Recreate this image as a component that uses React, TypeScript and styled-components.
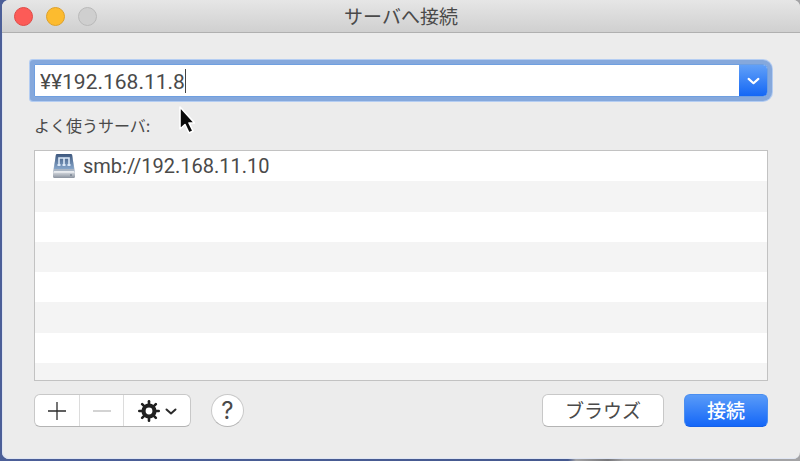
import React, { useState } from "react";
import styled, { createGlobalStyle, css } from "styled-components";

const GlobalStyle = createGlobalStyle`
  *, *::before, *::after { box-sizing: border-box; }
  body {
    margin: 0;
    font-family: Inter, "Noto Sans CJK JP", sans-serif;
    color: #4a4a4a;
  }
  button, input { font: inherit; color: inherit; }
`;

const addressText = css`
  font-family: Roboto, "Noto Sans CJK JP", sans-serif;
  font-size: 20px;
  line-height: 24px;
`;

const Desktop = styled.div`
  display: flex;
  min-height: 100vh;
  padding: 0 0 2px 2px;
  background: linear-gradient(90deg, #4c5f98 0, #45598f 71%, #a3a3a5 72%, #77777a 76%, #a3a3a5 78%);
`;

const Window = styled.main`
  position: relative;
  flex: 1;
  display: flex;
  flex-direction: column;
  background: #ececec;
  border-radius: 7px;
  box-shadow: inset 1px -1px 0 #dfe5f2;
  overflow: hidden;
`;

const TitleBar = styled.header`
  display: grid;
  grid-template-columns: 1fr auto 1fr;
  align-items: center;
  height: 33px;
  padding: 0 12px;
  background: linear-gradient(#e6e6e6, #d0d0d0);
  border-bottom: 1px solid #b0b0b0;
`;

const Lights = styled.div`
  display: flex;
  gap: 13px;
`;

const Light = styled.button<{ $fill: string; $edge: string }>`
  width: 19px;
  height: 19px;
  padding: 0;
  border: 1px solid ${(p) => p.$edge};
  border-radius: 50%;
  background: ${(p) => p.$fill};
`;

const Title = styled.h1`
  margin: 0;
  padding-top: 4px;
  font-size: 19px;
  line-height: 28px;
  font-weight: 400;
`;

const Content = styled.form`
  flex: 1;
  display: flex;
  flex-direction: column;
  padding: 31px 32px 32px;
`;

const ComboBox = styled.div`
  display: flex;
  height: 33px;
  border: 1px solid #6f9fe0;
  border-radius: 1px 5px 5px 1px;
  background: #fff;
  box-shadow: 0 0 0 4px #85a8dc, 0 0 0 5px #b4cdf2;
`;

const Entry = styled.label`
  flex: 1;
  min-width: 0;
  display: flex;
  align-items: center;
  padding-left: 5px;
  cursor: text;
`;

const AddressInput = styled.input`
  ${addressText}
  font-size: 21px;
  field-sizing: content;
  max-width: 100%;
  padding: 2px 0 0;
  border: 0;
  outline: 0;
  background: transparent;
  caret-color: transparent;
`;

const Caret = styled.span`
  width: 1px;
  height: 24px;
  background: #444;
`;

const DropButton = styled.button`
  display: grid;
  place-items: center;
  width: 28px;
  padding: 0;
  border: 0;
  border-radius: 0 4px 4px 0;
  background: linear-gradient(#61a0f8, #1467f5);
  color: #fff;
`;

const Caption = styled.h2`
  margin: 19px 0 14px;
  font-size: 16px;
  line-height: 20px;
  font-weight: 400;
`;

const ServerList = styled.ul`
  flex: 1;
  display: grid;
  grid-template-rows: repeat(7, minmax(30px, 16fr)) 9fr;
  margin: 0;
  padding: 0;
  border: 1px solid #c2c2c2;
  list-style: none;
`;

const ServerRow = styled.li`
  ${addressText}
  display: flex;
  align-items: center;
  gap: 7px;
  padding-left: 17px;
  background: #fff;
  &:nth-child(even) { background: #f4f4f4; }
`;

const Footer = styled.footer`
  display: flex;
  align-items: center;
  margin-top: 13px;
`;

const raised = css`
  border: 1px solid #c8c8c8;
  border-bottom-color: #b4b4b4;
  background: #fff;
`;

const Segments = styled.div`
  ${raised}
  display: flex;
  height: 33px;
  border-radius: 6px;
  overflow: hidden;
`;

const Segment = styled.button<{ $wide?: boolean }>`
  display: flex;
  align-items: center;
  justify-content: center;
  gap: 5px;
  width: ${(p) => (p.$wide ? 67 : 44)}px;
  padding: 0;
  border: 0;
  background: transparent;
  color: #2b2b2b;
  & + & { border-left: 1px solid #dcdcdc; }
  &:disabled { color: #c4c4c4; }
`;

const HelpButton = styled.button`
  ${raised}
  width: 33px;
  height: 33px;
  margin-left: 20px;
  padding: 0;
  border-radius: 50%;
  font-size: 24px;
  line-height: 28px;
`;

const Actions = styled.div`
  display: flex;
  gap: 20px;
  margin-left: auto;
`;

const ActionButton = styled.button<{ $primary?: boolean }>`
  ${raised}
  width: 122px;
  height: 33px;
  padding: 2px 0 0;
  border-radius: 6px;
  font-size: 19px;
  line-height: 28px;
  ${(p) =>
    p.$primary &&
    css`
      width: 84px;
      border-color: #4a8ef0;
      border-bottom-color: #1560e8;
      background: linear-gradient(#5c9df8, #1265f8);
      background-origin: border-box;
      color: #fff;
      font-weight: 500;
    `}
`;

const Pointer = styled.svg`
  position: absolute;
  left: 173px;
  top: 105px;
  pointer-events: none;
`;

const Chevron = ({ width }: { width: number }) => (
  <svg width={width} height={width} viewBox="0 0 12 12" fill="none" stroke="currentColor" strokeWidth="2" strokeLinecap="round" strokeLinejoin="round" aria-hidden="true">
    <path d="M1.5 4.5 6 8.5l4.500-4" />
  </svg>
);

const Sign = ({ plus }: { plus?: boolean }) => (
  <svg width="18" height="18" viewBox="0 0 18 18" stroke="currentColor" strokeWidth="1.300" aria-hidden="true">
    <path d={plus ? "M0 9h18M9 0v18" : "M0 9h18"} />
  </svg>
);

const Gear = () => (
  <svg width="22" height="22" viewBox="-11 -11 22 22" fill="none" stroke="#202020" aria-hidden="true">
    <circle r="5.500" strokeWidth="4.200" />
    {[0, 45, 90, 135, 180, 225, 270, 315].map((angle) => (
      <path key={angle} d="M0-6.500v-3.200" strokeWidth="2.600" strokeLinecap="round" transform={`rotate(${angle})`} />
    ))}
  </svg>
);

const ServerIcon = () => (
  <svg width="24" height="26" viewBox="0 0 24 26" aria-hidden="true">
    <defs>
      <linearGradient id="screen" x2="0" y2="1">
        <stop stopColor="#3e587e" />
        <stop offset="1" stopColor="#86a6cb" />
      </linearGradient>
      <linearGradient id="base" x2="0" y2="1">
        <stop stopColor="#e3e7ec" />
        <stop offset="1" stopColor="#8b939f" />
      </linearGradient>
    </defs>
    <path d="M4 2h16l3 17H1z" fill="#a9b5c4" />
    <path d="M5 1h14q1 0 1.200 1l1.800 14H2L3.800 2Q4 1 5 1z" fill="url(#screen)" />
    <path d="M7 12V5h10v7M12 5v7" fill="none" stroke="#dce9f8" strokeWidth="1.600" />
    <path d="M5.500 12h3M10.500 12h3M15.500 12h3" stroke="#dce9f8" strokeWidth="2" />
    <rect x="1" y="18" width="22" height="7" rx="1.500" fill="url(#base)" />
    <path d="M2 19h20" stroke="#f5f7f9" />
    <path d="M18 22h2" stroke="#5f6c7c" />
  </svg>
);

const emptyRows = ["r2", "r3", "r4", "r5", "r6", "r7", "r8"];

export default function App() {
  const [address, setAddress] = useState("¥¥192.168.11.8");
  return (
    <>
      <GlobalStyle />
      <Desktop>
        <Window>
          <TitleBar>
            <Lights>
              <Light type="button" aria-label="閉じる" $fill="#fc5b57" $edge="#df4b47" />
              <Light type="button" aria-label="しまう" $fill="#fcbb2f" $edge="#dda02a" />
              <Light type="button" aria-label="拡大" disabled $fill="#cfcfcf" $edge="#b9b9b9" />
            </Lights>
            <Title>サーバへ接続</Title>
          </TitleBar>
          <Content onSubmit={(e) => e.preventDefault()}>
            <ComboBox>
              <Entry>
                <AddressInput aria-label="サーバアドレス" value={address} onChange={(e) => setAddress(e.target.value)} />
                <Caret />
              </Entry>
              <DropButton type="button" aria-label="履歴を表示">
                <Chevron width={13} />
              </DropButton>
            </ComboBox>
            <Caption>よく使うサーバ:</Caption>
            <ServerList>
              <ServerRow>
                <ServerIcon />
                smb://192.168.11.10
              </ServerRow>
              {emptyRows.map((id) => (
                <ServerRow key={id} aria-hidden="true" />
              ))}
            </ServerList>
            <Footer>
              <Segments>
                <Segment type="button" aria-label="追加"><Sign plus /></Segment>
                <Segment type="button" aria-label="削除" disabled><Sign /></Segment>
                <Segment type="button" aria-label="操作" $wide>
                  <Gear />
                  <Chevron width={12} />
                </Segment>
              </Segments>
              <HelpButton type="button" aria-label="ヘルプ">?</HelpButton>
              <Actions>
                <ActionButton type="button">ブラウズ</ActionButton>
                <ActionButton type="submit" $primary>接続</ActionButton>
              </Actions>
            </Footer>
          </Content>
          <Pointer width="20" height="32" viewBox="0 0 20 32" aria-hidden="true">
            <path d="M5 2v22l5-4.500 4 8.500 4-2-4-8h5.500z" fill="#0a0a0a" stroke="#fff" strokeWidth="1.600" strokeLinejoin="round" />
          </Pointer>
        </Window>
      </Desktop>
    </>
  );
}
